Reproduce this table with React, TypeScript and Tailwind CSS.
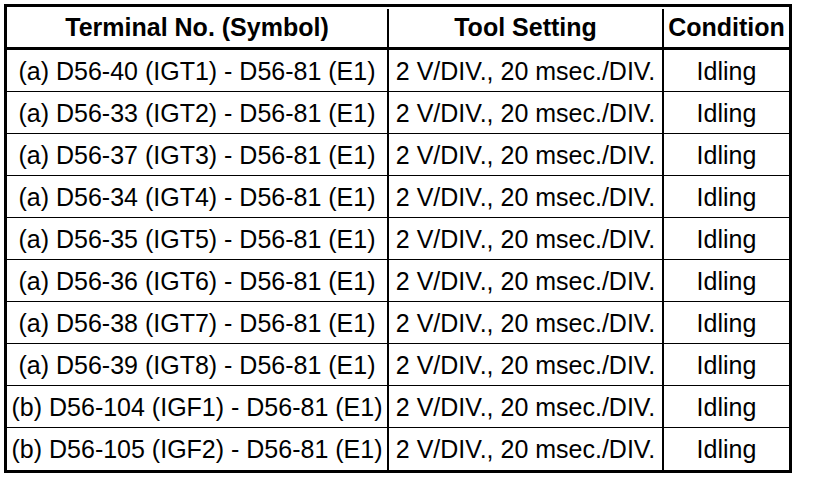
const rows = [
  "(a) D56-40 (IGT1) - D56-81 (E1)",
  "(a) D56-33 (IGT2) - D56-81 (E1)",
  "(a) D56-37 (IGT3) - D56-81 (E1)",
  "(a) D56-34 (IGT4) - D56-81 (E1)",
  "(a) D56-35 (IGT5) - D56-81 (E1)",
  "(a) D56-36 (IGT6) - D56-81 (E1)",
  "(a) D56-38 (IGT7) - D56-81 (E1)",
  "(a) D56-39 (IGT8) - D56-81 (E1)",
  "(b) D56-104 (IGF1) - D56-81 (E1)",
  "(b) D56-105 (IGF2) - D56-81 (E1)",
];

export default function App() {
  return (
    <div className="w-[816px] h-[480px] bg-white pt-[4px] pl-[4px] text-black font-['Liberation_Sans',Arial,sans-serif]">
      <div className="w-[788px] border-[3px] border-black">
        <div className="flex h-[43px] border-b-[3px] border-black text-[25px] font-bold pt-[2px]">
          <div className="w-[380px] flex items-center justify-center whitespace-nowrap">Terminal No. (Symbol)</div>
          <div className="w-[275px] border-l-2 border-black flex items-center justify-center whitespace-nowrap">Tool Setting</div>
          <div className="flex-1 border-l-2 border-black flex items-center justify-center">Condition</div>
        </div>
        {rows.map((r, i) => (
          <div
            key={r}
            className={
              "flex h-[42px] text-[25px] border-black " +
              (i < rows.length - 1 ? "border-b" : "")
            }
          >
            <div className="w-[380px] flex items-center justify-center whitespace-nowrap pt-[2px]">{r}</div>
            <div className="w-[275px] border-l-2 border-black flex items-center justify-center whitespace-nowrap pt-[2px]">
              2 V/DIV., 20 msec./DIV.
            </div>
            <div className="flex-1 border-l-2 border-black flex items-center justify-center pt-[2px]">Idling</div>
          </div>
        ))}
      </div>
    </div>
  );
}
